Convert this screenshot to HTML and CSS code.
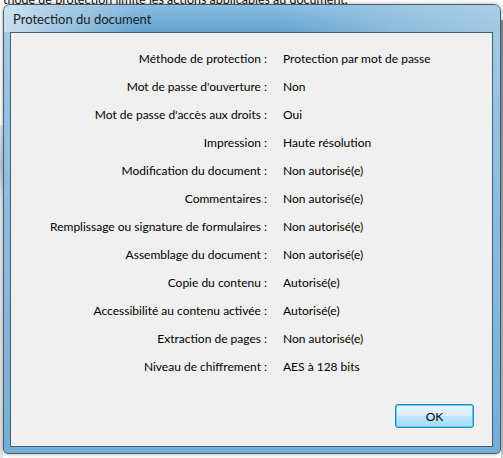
FILE: index.html
```html
<!DOCTYPE html>
<html lang="fr">
<head>
<meta charset="utf-8">
<link rel="stylesheet" href="styles.css">
</head>
<body>
<div class="desktop">
  <div class="behind">
    <div class="behind-text">thode de protection limite les actions applicables au document.</div>
    <div class="behind-left"></div>
    <div class="behind-right"></div>
  </div>
  <div class="dialog">
    <div class="titlebar">Protection du document</div>
    <div class="content">
      <div class="rows">
        <div class="label">Méthode de protection :</div><div class="value">Protection par mot de passe</div>
        <div class="label">Mot de passe d'ouverture :</div><div class="value">Non</div>
        <div class="label">Mot de passe d'accès aux droits :</div><div class="value">Oui</div>
        <div class="label">Impression :</div><div class="value">Haute résolution</div>
        <div class="label">Modification du document :</div><div class="value">Non autorisé(e)</div>
        <div class="label">Commentaires :</div><div class="value">Non autorisé(e)</div>
        <div class="label">Remplissage ou signature de formulaires :</div><div class="value">Non autorisé(e)</div>
        <div class="label">Assemblage du document :</div><div class="value">Non autorisé(e)</div>
        <div class="label">Copie du contenu :</div><div class="value">Autorisé(e)</div>
        <div class="label">Accessibilité au contenu activée :</div><div class="value">Autorisé(e)</div>
        <div class="label">Extraction de pages :</div><div class="value">Non autorisé(e)</div>
        <div class="label">Niveau de chiffrement :</div><div class="value">AES à 128 bits</div>
      </div>
      <div class="actions">
        <button class="btn">OK</button>
      </div>
    </div>
  </div>
</div>
</body>
</html>
```

FILE: styles.css
```css
html, body {
  margin: 0;
  padding: 0;
  background: #ffffff;
  overflow: hidden;
}
.desktop {
  position: relative;
  width: 503px;
  height: 458px;
  font-family: "Lato", "Noto Sans", sans-serif;
  font-size: 12px;
  color: #000;
}
.behind {
  position: absolute;
  inset: 0;
  background: #ffffff;
}
.behind-text {
  position: absolute;
  left: 3px;
  top: -8px;
  font-size: 12.5px;
  color: #111;
  white-space: nowrap;
}
.behind-left {
  position: absolute;
  left: 0;
  top: 125px;
  width: 3px;
  height: 333px;
  background: linear-gradient(#dfe8ef, #b8cfe0 40px, #e9eef2 80px, #e4e4e4);
}
.behind-right {
  position: absolute;
  right: 0;
  top: 20px;
  width: 2px;
  height: 438px;
  background: linear-gradient(#8a9096, #c7cdd2);
}
.dialog {
  position: absolute;
  left: 3px;
  top: 4px;
  width: 498px;
  height: 450px;
  border: 1px solid #4b5a66;
  border-radius: 7px 7px 5px 5px;
  background: linear-gradient(180deg, #a9cde6 0%, #94c1e1 25%, #86b9dd 60%, #74afd9 100%);
  padding: 0 7px 6px 6px;
  box-sizing: border-box;
  display: flex;
  flex-direction: column;
  box-shadow: 0 0 4px rgba(0,0,0,0.35);
}
.titlebar {
  height: 27px;
  flex: none;
  display: flex;
  align-items: center;
  box-sizing: border-box;
  font-size: 13px;
  color: #1a1a1a;
  margin: 0 -7px 0 -6px;
  padding-left: 9px;
  padding-top: 1px;
  border-radius: 6px 6px 0 0;
  background:
    linear-gradient(90deg, rgba(212,230,242,0.9) 0%, rgba(190,216,234,0.6) 12%, rgba(120,175,212,0) 28%, rgba(100,165,208,0) 55%, rgba(170,205,228,0.6) 80%, rgba(185,214,234,0.7) 100%),
    linear-gradient(180deg, #8abde0 0%, #62a2cf 100%);
}
.content {
  flex: 1;
  border: 1px solid #3f5c72;
  background: #f0f0f0;
  display: flex;
  flex-direction: column;
  box-sizing: border-box;
}
.rows {
  display: grid;
  grid-template-columns: 256px 1fr;
  column-gap: 16px;
  grid-auto-rows: 28px;
  align-items: center;
  margin-top: 11px;
}
.label {
  text-align: right;
  white-space: nowrap;
}
.value {
  white-space: nowrap;
}
.actions {
  margin-top: auto;
  display: flex;
  justify-content: flex-end;
  padding: 0 18px 18px 0;
}
.btn {
  width: 79px;
  height: 24px;
  border: 1px solid #3c7fb1;
  border-radius: 3px;
  font-family: "Lato", "Noto Sans", sans-serif;
  font-size: 12px;
  color: #000;
  padding: 0;
  background: linear-gradient(180deg, #eaf6fd 0%, #d9f0fc 50%, #bee6fd 51%, #a7d9f5 100%);
  box-shadow: inset 0 0 0 1px #48d8fb;
}
```
